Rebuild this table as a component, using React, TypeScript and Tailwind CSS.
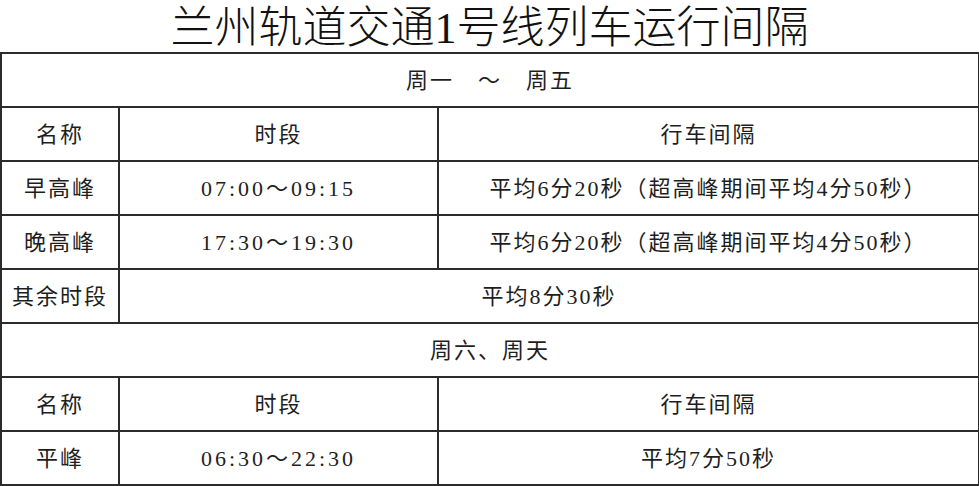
const font = {
  fontFamily: '"Liberation Serif", "Noto Sans CJK SC", serif',
};

const cell = "border-2 border-[#2b2b2b] text-center align-middle h-[54px] p-0";
const timeCell = cell + " tracking-[3px]";

function HeaderRow() {
  return (
    <tr>
      <td className={cell}>名称</td>
      <td className={cell}>时段</td>
      <td className={cell}>行车间隔</td>
    </tr>
  );
}

export default function App() {
  return (
    <div className="w-[979px] h-[486px] bg-white overflow-hidden text-[#1e1e1e]" style={font}>
      <h1 className="h-[52px] text-center text-[44px] leading-[58px] font-light text-[#111]">
        兰州轨道交通1号线列车运行间隔
      </h1>
      <table className="w-[978px] border-collapse table-fixed text-[22px] tracking-[2px]">
        <colgroup>
          <col className="w-[118px]" />
          <col className="w-[319px]" />
          <col className="w-[541px]" />
        </colgroup>
        <tbody>
          <tr>
            <td colSpan={3} className={cell}>
              周一　～　周五
            </td>
          </tr>
          <HeaderRow />
          <tr>
            <td className={cell}>早高峰</td>
            <td className={timeCell}>07:00～09:15</td>
            <td className={cell}>平均6分20秒（超高峰期间平均4分50秒）</td>
          </tr>
          <tr>
            <td className={cell}>晚高峰</td>
            <td className={timeCell}>17:30～19:30</td>
            <td className={cell}>平均6分20秒（超高峰期间平均4分50秒）</td>
          </tr>
          <tr>
            <td className={cell}>其余时段</td>
            <td colSpan={2} className={cell}>
              平均8分30秒
            </td>
          </tr>
          <tr>
            <td colSpan={3} className={cell}>
              周六、周天
            </td>
          </tr>
          <HeaderRow />
          <tr>
            <td className={cell}>平峰</td>
            <td className={timeCell}>06:30～22:30</td>
            <td className={cell}>平均7分50秒</td>
          </tr>
        </tbody>
      </table>
    </div>
  );
}
